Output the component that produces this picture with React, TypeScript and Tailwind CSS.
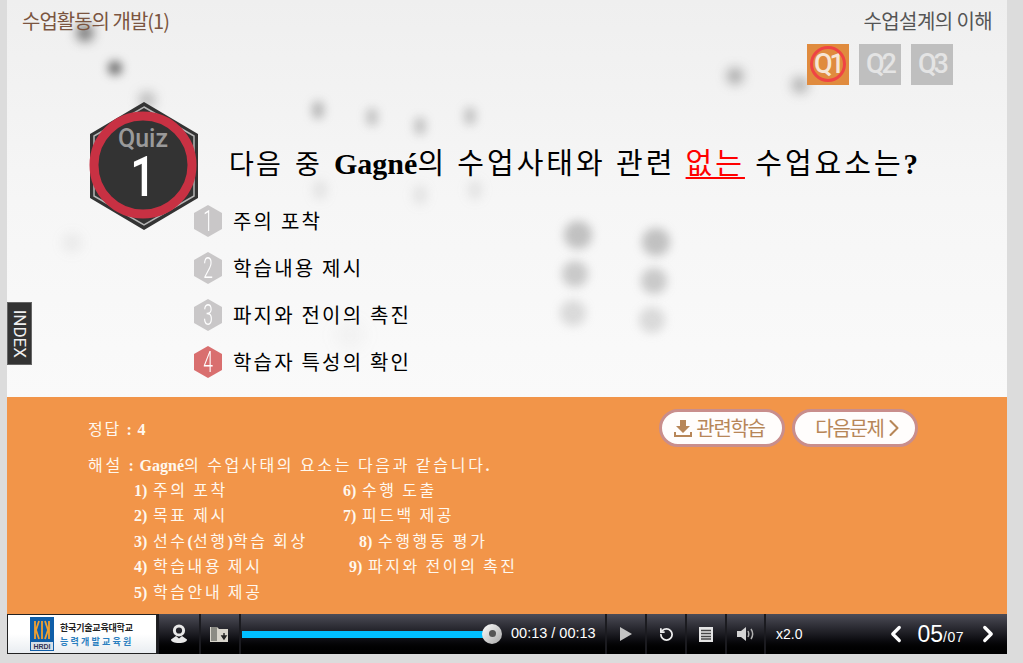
import React from 'react';
import { ChevronLeft, ChevronRight, RotateCw } from 'lucide-react';

const SERIF = 'font-["Liberation_Serif","Noto_Sans_CJK_KR",serif]';

// blurred photo behind the question, purely decorative
const blurDots = [
  { x: 85, y: 33, w: 16, h: 16, c: 'rgba(40,40,40,0.7)', b: 6 },
  { x: 115, y: 68, w: 14, h: 14, c: 'rgba(50,50,50,0.7)', b: 5 },
  { x: 147, y: 100, w: 16, h: 16, c: 'rgba(90,90,90,0.4)', b: 6 },
  { x: 318, y: 110, w: 12, h: 18, c: 'rgba(90,90,90,0.38)', b: 5 },
  { x: 372, y: 117, w: 12, h: 18, c: 'rgba(90,90,90,0.3)', b: 5 },
  { x: 420, y: 126, w: 12, h: 18, c: 'rgba(90,90,90,0.3)', b: 5 },
  { x: 470, y: 116, w: 12, h: 18, c: 'rgba(90,90,90,0.3)', b: 5 },
  { x: 735, y: 76, w: 16, h: 16, c: 'rgba(70,70,70,0.45)', b: 6 },
  { x: 800, y: 85, w: 16, h: 16, c: 'rgba(70,70,70,0.4)', b: 6 },
  { x: 320, y: 190, w: 12, h: 18, c: 'rgba(120,120,120,0.18)', b: 6 },
  { x: 420, y: 195, w: 12, h: 18, c: 'rgba(120,120,120,0.18)', b: 6 },
  { x: 475, y: 190, w: 12, h: 18, c: 'rgba(120,120,120,0.18)', b: 6 },
  { x: 578, y: 235, w: 28, h: 28, c: 'rgba(120,120,120,0.42)', b: 5 },
  { x: 656, y: 242, w: 28, h: 28, c: 'rgba(120,120,120,0.42)', b: 5 },
  { x: 575, y: 274, w: 26, h: 26, c: 'rgba(120,120,120,0.36)', b: 5 },
  { x: 654, y: 281, w: 26, h: 26, c: 'rgba(120,120,120,0.36)', b: 5 },
  { x: 573, y: 313, w: 26, h: 26, c: 'rgba(130,130,130,0.26)', b: 5 },
  { x: 652, y: 320, w: 26, h: 26, c: 'rgba(130,130,130,0.26)', b: 5 },
  { x: 72, y: 243, w: 20, h: 20, c: 'rgba(130,130,130,0.1)', b: 6 },
  { x: 350, y: 335, w: 30, h: 30, c: 'rgba(130,130,130,0.06)', b: 8 },
];

const options = [
  { n: 1, text: '주의 포착', fill: '#c9c7c8' },
  { n: 2, text: '학습내용 제시', fill: '#c9c7c8' },
  { n: 3, text: '파지와 전이의 촉진', fill: '#c9c7c8' },
  { n: 4, text: '학습자 특성의 확인', fill: '#d96f6f' },
];

const steps = [
  { left: '1) 주의 포착', right: '6) 수행 도출', w: 'w-[209px]' },
  { left: '2) 목표 제시', right: '7) 피드백 제공', w: 'w-[209px]' },
  { left: '3) 선수(선행)학습 회상', right: '8) 수행행동 평가', w: 'w-[225px]' },
  { left: '4) 학습내용 제시', right: '9) 파지와 전이의 촉진', w: 'w-[215px]' },
  { left: '5) 학습안내 제공', right: '', w: 'w-[209px]' },
];

// latin, digits and punctuation are bold in the original, hangul is not
function Mixed({ text }: { text: string }) {
  const parts = text.split(/([^\uac00-\ud7a3\s]+)/);
  return (
    <>
      {parts.map((p, i) => (i % 2 === 1 ? <b key={i} className="tracking-normal">{p}</b> : <span key={i}>{p}</span>))}
    </>
  );
}

function QuizBadge() {
  return (
    <div className="relative h-[130px] w-[112px] shrink-0">
      <svg width="112" height="130" viewBox="0 0 112 130">
        <polygon points="56,1 110,33 110,97 56,129 2,97 2,33" fill="#333333" />
        <polygon points="56,6 106,35 106,95 56,124 6,95 6,35" fill="none" stroke="#b5b5b5" strokeWidth="1.5" />
        <circle cx="55" cy="64" r="49" fill="#333333" stroke="#c83143" strokeWidth="9" />
      </svg>
      <div className='absolute left-0 top-[26px] flex w-[110px] flex-col items-center font-["Roboto",sans-serif] font-medium'>
        <span className="text-[25px] leading-[24px] text-[#9a9a9a]">Quiz</span>
        <span className="mt-[4px] scale-x-[0.8] text-[56px] leading-[44px] text-white">1</span>
      </div>
    </div>
  );
}

function NumberHex({ n, fill }: { n: number; fill: string }) {
  return (
    <div className="relative h-[32px] w-[30px] shrink-0">
      <svg width="30" height="32" viewBox="0 0 30 32">
        <polygon points="15,0 29,8 29,24 15,32 1,24 1,8" fill={fill} />
      </svg>
      <span className='absolute inset-0 flex scale-x-[0.6] items-center justify-center font-["Roboto",sans-serif] text-[29px] font-light leading-[32px] text-white'>{n}</span>
    </div>
  );
}

function QTab({ label, active }: { label: string; active?: boolean }) {
  return (
    <div className={`relative flex h-[41px] w-[42px] items-center justify-center ${active ? 'bg-[#e08b3e]' : 'bg-[#bfbfbf]'}`}>
      <span className={`font-["Roboto",sans-serif] text-[27px] font-medium tracking-[-3px] ${active ? 'text-[#f7e6d6]' : 'text-[#e4e4e4]'}`}>{label}</span>
      {active && <span className="absolute left-[3px] top-[2px] h-[36px] w-[36px] rounded-full border-[3px] border-[#ef4444]" />}
    </div>
  );
}

function PillButton({ className, children }: { className?: string; children: React.ReactNode }) {
  return (
    <div className={`flex h-[38px] w-[126px] items-center justify-center gap-[3px] rounded-full border-[3px] border-[#c98e8c] bg-[#fffdfc] font-["Noto_Sans_CJK_KR",sans-serif] text-[20px] font-normal tracking-[-1.300px] text-[#b78658] ${className ?? ''}`}>
      {children}
    </div>
  );
}

function Cell({ className, children }: { className: string; children?: React.ReactNode }) {
  return (
    <div className={`flex h-full shrink-0 items-center justify-center border-l-2 border-[#1b1b20] ${className}`}>{children}</div>
  );
}

function PlayerBar() {
  return (
    <div className='flex h-[40px] bg-gradient-to-b from-[#4d4d58] via-[#1c1c22] to-[#000000] font-["Liberation_Sans",sans-serif] text-white'>
      <div className="flex h-full w-[150px] shrink-0 items-center border border-[#222] bg-gradient-to-b from-white via-white to-[#e9edf1] pl-[22px]">
        <svg width="24" height="34" viewBox="0 0 24 34" className="shrink-0">
          <rect width="24" height="34" fill="#0f5ea8" />
          <path d="M5 4v18M9 4l-3 9 3 9M12 4v18M15 4l3 9-3 9M19 4v18" stroke="#f0a030" strokeWidth="1.8" fill="none" />
          <rect x="1" y="25" width="22" height="8" fill="#d6dfe8" />
          <text x="12" y="32" textAnchor="middle" fontSize="7" fontWeight="700" fill="#335" fontFamily="Liberation Sans, sans-serif">HRDI</text>
        </svg>
        <div className='ml-[6px] font-["Noto_Sans_CJK_KR",sans-serif] leading-[13px]'>
          <div className="text-[9px] font-bold tracking-[-0.2px] text-[#222]">한국기술교육대학교</div>
          <div className="mt-[1px] text-[9px] font-bold tracking-[2.200px] text-[#2b7fc0]">능력개발교육원</div>
        </div>
      </div>
      <Cell className="w-[42px]">
        <svg width="18" height="20" viewBox="0 0 18 20">
          <circle cx="9" cy="6.500" r="4.600" fill="none" stroke="#e8e8e8" strokeWidth="3" />
          <path d="M6 12 1 15.500c0 2 3 3.500 8 3.500s8-1.500 8-3.500L12 12l-3 2.500z" fill="#e8e8e8" />
        </svg>
      </Cell>
      <Cell className="w-[40px]">
        <svg width="20" height="16" viewBox="0 0 20 16">
          <path d="M0 1h7l2 2h9v13H0z" fill="#d8d5cc" />
          <path d="M1 1h6v14H1z" fill="#8b8b84" />
          <path d="M14 7v4m-2-1 2 3 2-3z" stroke="#222" strokeWidth="1.400" fill="#222" />
        </svg>
      </Cell>
      <div className="flex h-full w-[366px] shrink-0 items-center border-l-2 border-[#1b1b20] pl-[1px]">
        <div className="relative h-[7px] w-[248px] bg-[#00bfff]">
          <span className="absolute right-[-12px] top-[-7px] flex h-[20px] w-[20px] items-center justify-center rounded-full bg-gradient-to-br from-white to-[#a8a8a8]">
            <span className="h-[7px] w-[7px] rounded-full bg-[#555]" />
          </span>
        </div>
        <span className="ml-[21px] whitespace-nowrap text-[14.500px]">00:13 / 00:13</span>
      </div>
      <Cell className="w-[40px]">
        <svg width="12" height="14" viewBox="0 0 12 14"><polygon points="0,0 12,7 0,14" fill="#c4c4c4" /></svg>
      </Cell>
      <Cell className="w-[40px]">
        <RotateCw size={15} strokeWidth={2.800} color="#efefef" className="-scale-x-100" />
      </Cell>
      <Cell className="w-[40px]">
        <svg width="14" height="15" viewBox="0 0 14 15">
          <rect width="14" height="15" fill="#e4e4e4" />
          <path d="M2 3.500h10M2 6.500h10M2 9.500h10M2 12h10" stroke="#444" strokeWidth="1.300" />
        </svg>
      </Cell>
      <Cell className="w-[39px]">
        <svg width="18" height="14" viewBox="0 0 18 14">
          <path d="M0 4h4l5-4v14l-5-4H0z" fill="#d4d4d4" />
          <path d="M11 4c1 2 1 4 0 6M14 2c2 3 2 7 0 10" stroke="#b0b0b0" strokeWidth="1.500" fill="none" />
        </svg>
      </Cell>
      <div className="flex h-full flex-1 items-center border-l-2 border-[#1b1b20] pl-[10px]">
        <span className="text-[14px]">x2.0</span>
        <ChevronLeft size={26} strokeWidth={3} className="ml-[81px]" />
        <span className="ml-[8px] text-[23px] leading-none">05</span>
        <span className="mt-[6px] text-[14px] leading-none tracking-[0.5px]">/07</span>
        <ChevronRight size={26} strokeWidth={3} className="ml-[11px]" />
      </div>
    </div>
  );
}

export default function App() {
  return (
    <div className="h-[663px] w-[1023px] overflow-hidden bg-[#dcdcdc] pl-[7px]">
      <div className="flex h-[654px] w-[1000px] flex-col">
        <section className="relative h-[397px] overflow-hidden bg-gradient-to-b from-[#efefef] via-[#f6f6f6] to-[#fafafa]">
          {/* decorative blur layer, offsets are page x minus the 7px gutter */}
          <div className="absolute inset-0">
            {blurDots.map((d) => (
              <span
                key={`${d.x}-${d.y}`}
                className="absolute rounded-full"
                style={{
                  left: d.x - 7 - d.w / 2,
                  top: d.y - d.h / 2,
                  width: d.w,
                  height: d.h,
                  background: d.c,
                  filter: `blur(${d.b}px)`,
                }}
              />
            ))}
          </div>

          <div className='relative font-["Noto_Sans_CJK_KR",sans-serif]'>
            <div className="flex items-start justify-between pl-[15px] pr-[15px] pt-[7px]">
              <h1 className="text-[20px] leading-[27px] tracking-[-1px] text-[#7b5540]">수업활동의 개발(1)</h1>
              <h2 className="text-[20px] leading-[27px] tracking-[-0.600px] text-[#555555]">수업설계의 이해</h2>
            </div>

            <div className="mt-[10px] flex justify-end gap-[10px] pr-[54px]">
              <QTab label="Q1" active />
              <QTab label="Q2" />
              <QTab label="Q3" />
            </div>

            <div className="mt-[16px] flex items-start pl-[81px]">
              <QuizBadge />
              <p className={`ml-[29px] mt-[45px] whitespace-nowrap text-[27px] leading-[36px] tracking-[2.200px] text-black ${SERIF}`}>
                <span className="[word-spacing:3px]">다음 중 </span>
                <b className="text-[30px] tracking-normal">Gagné</b>
                <span className="text-[29px] tracking-[3px]">의 수업사태와 관련 <span className="text-[#ff0000] underline underline-offset-[3px]">없는</span> 수업요소는</span>
                <b className="text-[29px]">?</b>
              </p>
            </div>

            <ul className="ml-[186px] mt-[-26px] flex flex-col gap-[15px]">
              {options.map((o) => (
                <li key={o.n} className="flex h-[32px] items-center">
                  <NumberHex n={o.n} fill={o.fill} />
                  <span className="ml-[10px] text-[20px] tracking-[2.200px] text-black">{o.text}</span>
                </li>
              ))}
            </ul>
          </div>

          <div className="absolute left-0 top-[302px] flex h-[63px] w-[25px] items-center justify-center border border-[#666] bg-[#333333]">
            <span className='rotate-90 font-["Roboto",sans-serif] text-[17px] text-[#eeeeee]'>INDEX</span>
          </div>
        </section>

        <section className={`flex h-[217px] flex-col bg-[#f29549] pl-[81px] pr-[89px] text-[16px] text-[#fff8ee] ${SERIF}`}>
          <div className="flex items-start justify-between pt-[12px]">
            <div className="pt-[11px] leading-[20px] tracking-[1.700px]">
              <Mixed text="정답 : 4" />
            </div>
            <div className="flex gap-[7px]">
              <PillButton className="pr-[5px]">
                <svg width="18" height="18" viewBox="0 0 18 18" className="mr-[1px]">
                  <path d="M6 1h6v6h4l-7 7-7-7h4z" fill="#b78658" />
                  <path d="M1 13v4h16v-4" fill="none" stroke="#b78658" strokeWidth="2" />
                </svg>
                관련학습
              </PillButton>
              <PillButton>
                <span className="ml-[13px]">다음문제</span>
                <ChevronRight size={28} strokeWidth={1.800} color="#b78658" className="-ml-[7px]" />
              </PillButton>
            </div>
          </div>

          <p className="mt-[9px] whitespace-nowrap leading-[20px] tracking-[2.700px] [word-spacing:-1px]">
            <Mixed text="해설 : Gagné의 수업사태의 요소는 다음과 같습니다." />
          </p>
          <ol className="ml-[46px] mt-[2px] flex flex-col tracking-[2.600px] [word-spacing:-1px]">
            {steps.map((s) => (
              <li key={s.left} className="flex h-[25.500px] items-center whitespace-nowrap">
                <span className={s.w}><Mixed text={s.left} /></span>
                <span><Mixed text={s.right} /></span>
              </li>
            ))}
          </ol>
        </section>

        <PlayerBar />
      </div>
    </div>
  );
}
